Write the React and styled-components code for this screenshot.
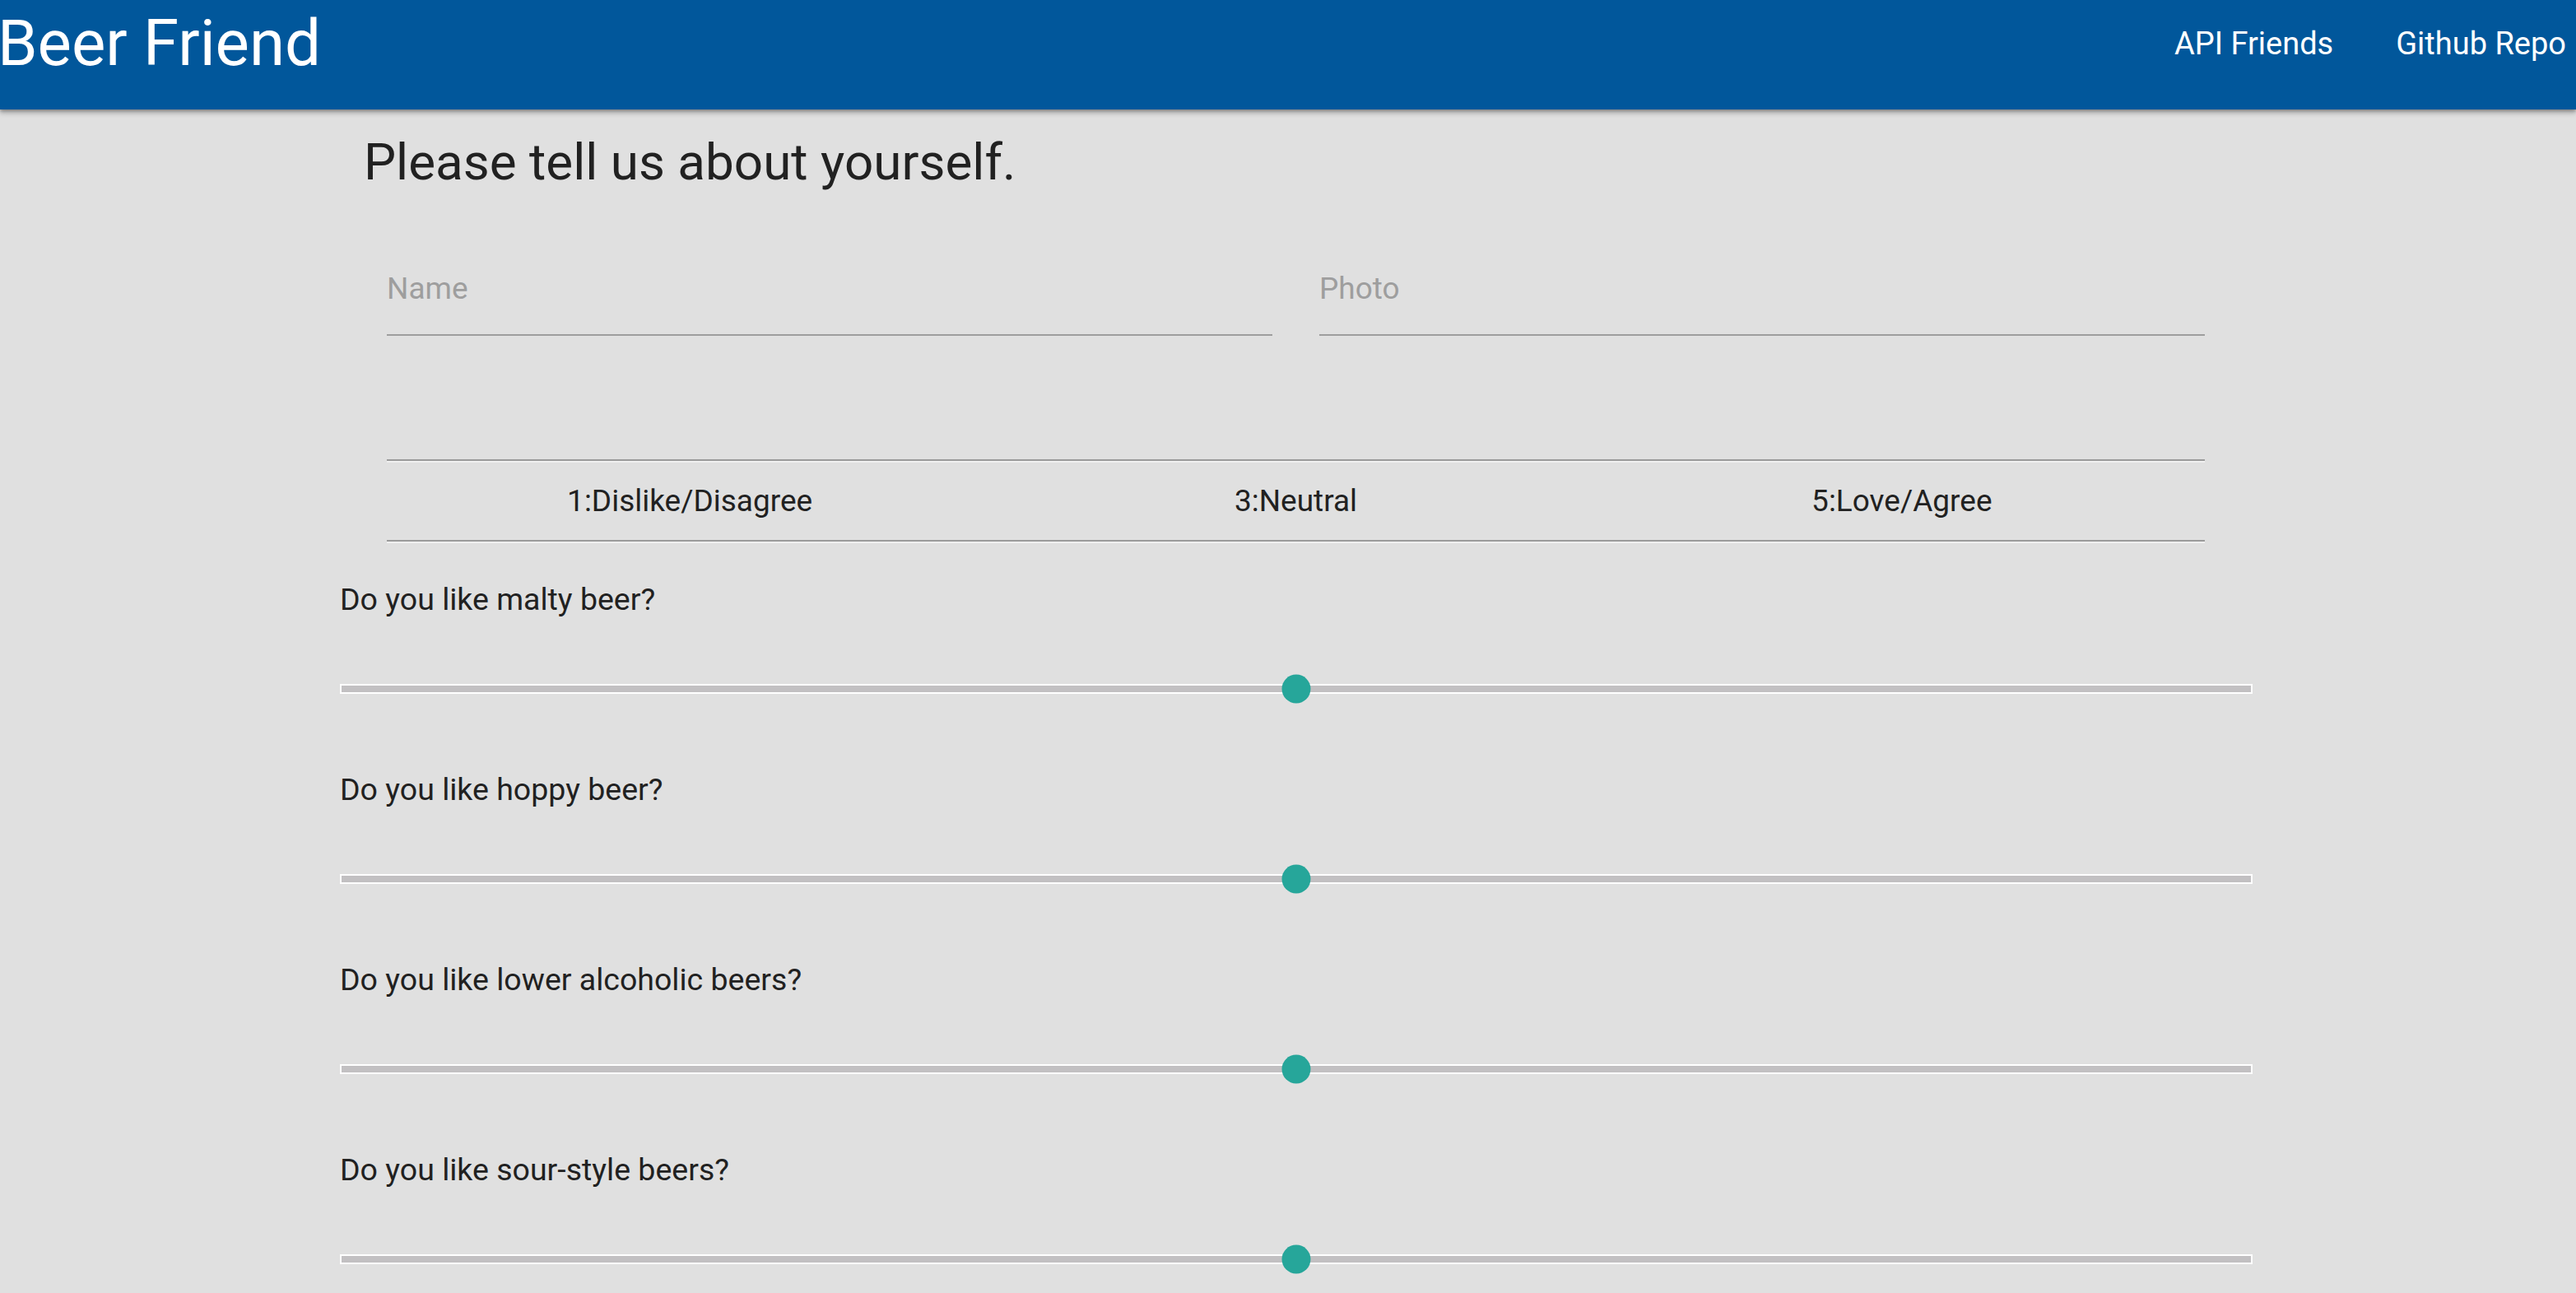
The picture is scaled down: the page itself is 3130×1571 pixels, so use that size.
import styled, { createGlobalStyle } from 'styled-components';

const GlobalStyle = createGlobalStyle`
    html, body {
        margin: 0;
        padding: 0;
        background-color: #e0e0e0;
        font-family: Roboto, "Liberation Sans", sans-serif;
        color: #212121;
    }
`;

const Nav = styled.nav`
    height: 133px;
    background-color: #01579b;
    color: #fff;
    box-shadow: 0 4px 6px rgba(0, 0, 0, 0.28), 0 2px 3px rgba(0, 0, 0, 0.18);
    display: flex;
    justify-content: space-between;
    align-items: flex-start;
    line-height: 106px;
    position: relative;
    z-index: 1;
`;

const Brand = styled.a`
    font-size: 78px;
    margin-left: -3px;
    white-space: nowrap;
    color: #fff;
`;

const Links = styled.ul`
    display: flex;
    list-style: none;
    margin: 0;
    padding: 0 12px 0 0;
    li + li {
        margin-left: 76px;
    }
    a {
        font-size: 38px;
        color: #fff;
        text-decoration: none;
    }
`;

const Main = styled.main`
    width: 2324px;
    margin-left: 413px;
    padding-bottom: 60px;
`;

const Heading = styled.h4`
    margin: 24px 0 0 29px;
    font-size: 62px;
    font-weight: 400;
    line-height: 80px;
`;

const FieldRow = styled.div`
    display: flex;
    gap: 57px;
    margin: 92px 58px 0 57px;
`;

const Field = styled.div`
    flex: 1;
    padding-bottom: 33px;
    border-bottom: 2px solid #9e9e9e;
    font-size: 37px;
    line-height: 44px;
    color: #9e9e9e;
`;

const Scale = styled.div`
    margin: 150px 58px 0 57px;
`;

const Rule = styled.hr`
    margin: 0;
    height: 0;
    border: none;
    border-top: 2px solid #9b9b9b;
    border-bottom: 2px solid #efefef;
`;

const ScaleRow = styled.div`
    display: grid;
    grid-template-columns: repeat(3, 1fr);
    text-align: center;
    font-size: 37px;
    line-height: 94px;
`;

const Question = styled.div`
    padding-top: ${(p) => (p.first ? '46px' : '94px')};
`;

const Label = styled.div`
    font-size: 37.5px;
    line-height: 44px;
`;

const Track = styled.div`
    position: relative;
    margin-top: 81px;
    height: 12px;
    box-sizing: border-box;
    border: 2px solid #fff;
    background-color: #c2c0c2;
`;

const Thumb = styled.span`
    position: absolute;
    top: 50%;
    width: 35px;
    height: 35px;
    border-radius: 50%;
    background-color: #26a69a;
    transform: translate(-50%, -50%);
`;

const questions = [
    'Do you like malty beer?',
    'Do you like hoppy beer?',
    'Do you like lower alcoholic beers?',
    'Do you like sour-style beers?',
];

const App = () => {
    return (
        <>
            <GlobalStyle />
            <Nav>
                <Brand>Beer Friend</Brand>
                <Links>
                    <li>
                        <a href="#friends">API Friends</a>
                    </li>
                    <li>
                        <a href="#repo">Github Repo</a>
                    </li>
                </Links>
            </Nav>
            <Main>
                <Heading>Please tell us about yourself.</Heading>
                <FieldRow>
                    <Field>Name</Field>
                    <Field>Photo</Field>
                </FieldRow>
                <Scale>
                    <Rule />
                    <ScaleRow>
                        <span>1:Dislike/Disagree</span>
                        <span>3:Neutral</span>
                        <span>5:Love/Agree</span>
                    </ScaleRow>
                    <Rule />
                </Scale>
                {questions.map((q, i) => (
                    <Question key={q} first={i === 0}>
                        <Label>{q}</Label>
                        {/* value 3 of 1..5 -> middle */}
                        <Track>
                            <Thumb style={{ left: `${((3 - 1) / 4) * 100}%` }} />
                        </Track>
                    </Question>
                ))}
            </Main>
        </>
    );
};

export default App;
